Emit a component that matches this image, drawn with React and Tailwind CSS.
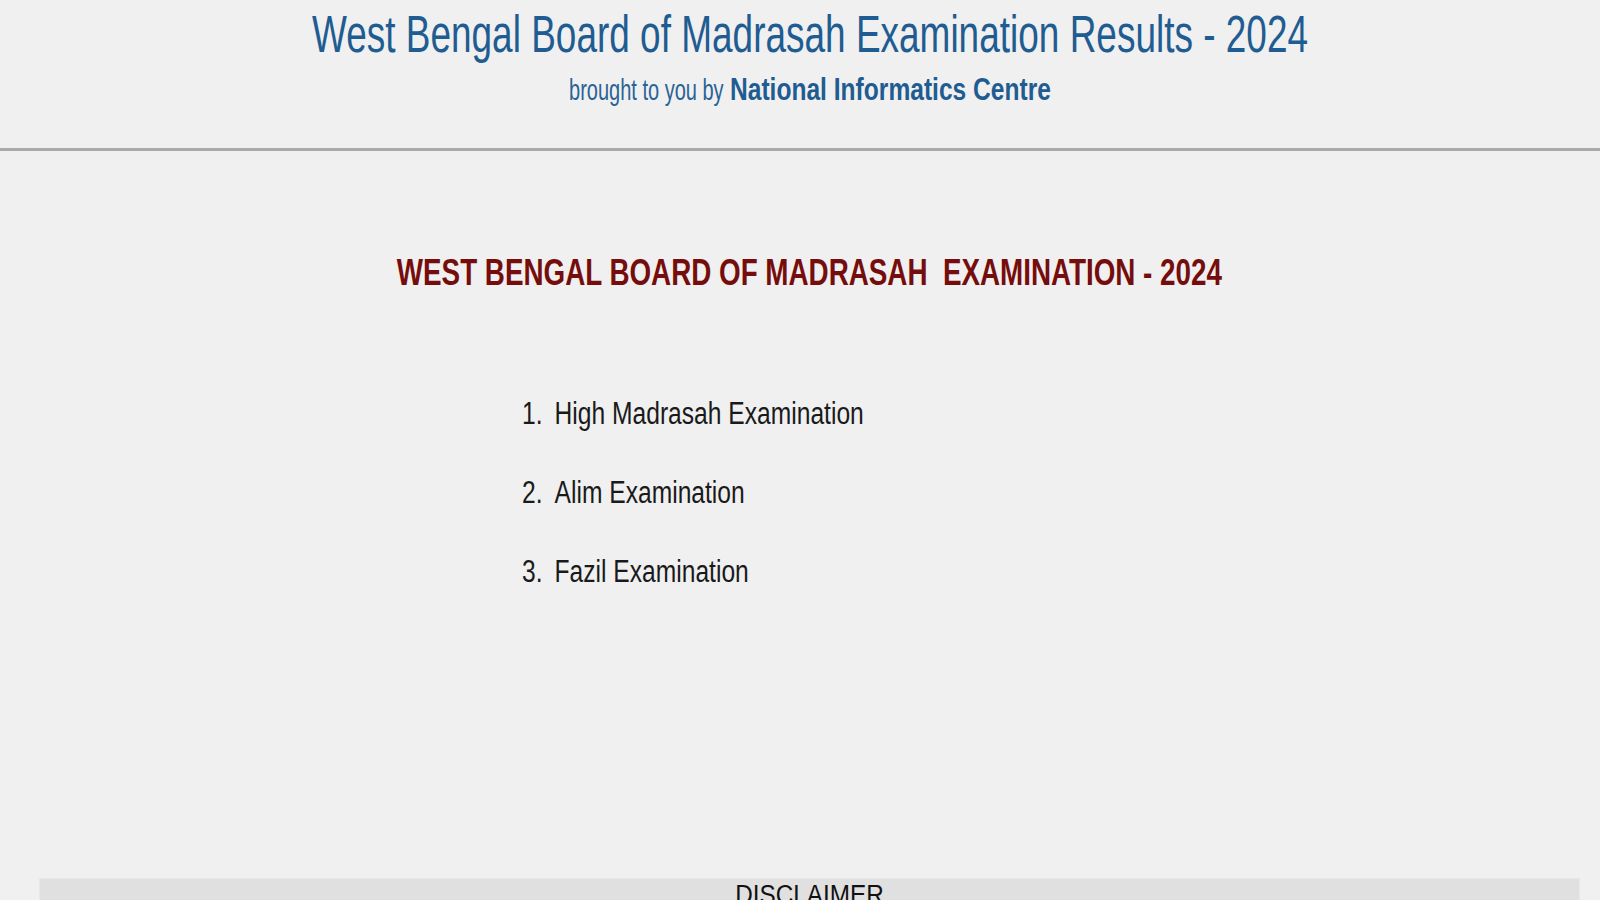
import React from 'react';

const exams = ['High Madrasah Examination', 'Alim Examination', 'Fazil Examination'];

const App = () => {
    return (
        <div className="min-h-screen overflow-hidden bg-[#f0f0f0] font-['Liberation_Sans',Arial,sans-serif]">
            {/* Header */}
            <div className="h-[148px] pl-[19px] pt-[9px]">
                <div className="whitespace-nowrap text-center text-[51px] leading-[52px] text-[#1f5c91]">
                    <span className="inline-block scale-x-[0.725]">West Bengal Board of Madrasah Examination Results - 2024</span>
                </div>
                <div className="mt-[13px] flex items-baseline justify-center whitespace-nowrap text-[#1f5c91]">
                    <span className="inline-block w-[161px] text-[29px] leading-[30px] text-[#2a6396]">
                        <span className="inline-block origin-left scale-x-[0.69]">brought to you by</span>
                    </span>
                    <span className="inline-block w-[321px] text-[32px] font-bold leading-[30px]">
                        <span className="inline-block origin-left scale-x-[0.768]">National Informatics Centre</span>
                    </span>
                </div>
            </div>
            <div className="h-[3px] bg-[#aaaaaa]"></div>

            {/* Main */}
            <div className="pl-[19px]">
                <h2 className="mt-[104px] whitespace-nowrap text-center text-[36px] font-bold leading-[36px] text-[#760d0d]">
                    <span className="inline-block scale-x-[0.772]">WEST BENGAL BOARD OF MADRASAH&nbsp; EXAMINATION - 2024</span>
                </h2>

                <div className="ml-[503px] mt-[107px] flex flex-col gap-[48px]">
                    {exams.map((name, i) => (
                        <div key={name} className="flex origin-left scale-x-[0.794] whitespace-nowrap text-[31px] leading-[31px] text-[#1a1a1a]">
                            <span className="w-[41px]">{i + 1}.</span>
                            <span>{name}</span>
                        </div>
                    ))}
                </div>

                <div className="mx-[20px] mt-[291px] h-[60px] border border-[#e8e8e8] bg-[#e0e0e0] pt-[3px] text-center">
                    <span className="inline-block scale-x-[0.9] text-[27px] leading-[26px] text-[#111111]">DISCLAIMER</span>
                </div>
            </div>
        </div>
    );
};

export default App;
